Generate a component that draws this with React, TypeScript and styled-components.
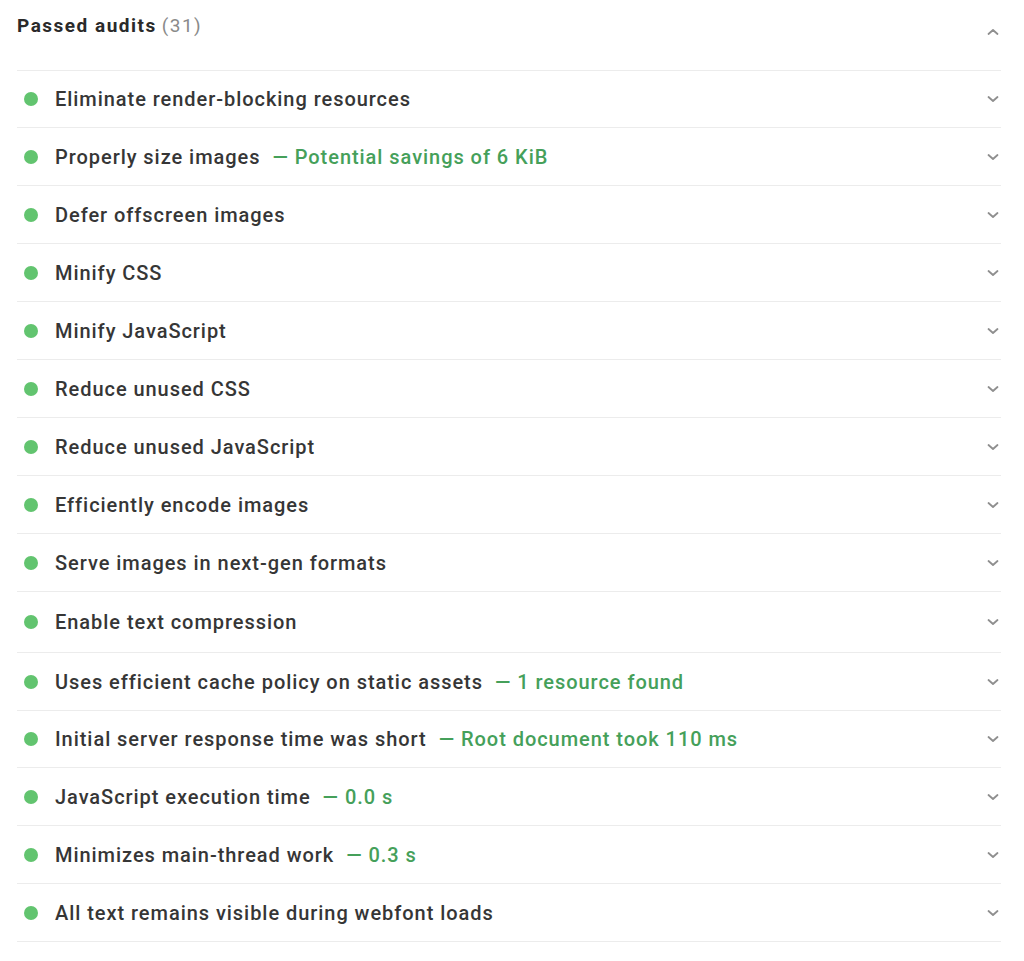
import React from "react";
import styled, { createGlobalStyle } from "styled-components";

const Global = createGlobalStyle`
  html, body { margin: 0; padding: 0; background: #ffffff; }
  body { font-family: Roboto, "Liberation Sans", Arial, sans-serif; color: #2f2f2f; }
`;

const Panel = styled.section`
  width: 984px;
  margin-left: 17px;
`;

const Header = styled.div`
  height: 70px;
  display: flex;
  align-items: flex-start;
  justify-content: space-between;
  border-bottom: 1px solid #ececec;
`;

const Title = styled.h2`
  margin: 14px 0 0 0;
  font-size: 19px;
  line-height: 24px;
  font-weight: 700;
  color: #2a2a2a;
  letter-spacing: 1.5px;
`;

const Count = styled.span`
  font-weight: 400;
  color: #8a8a8a;
  margin-left: 5px;
`;

const List = styled.ul`
  list-style: none;
  margin: 0;
  padding: 0;
`;

const Row = styled.li<{ $h: number }>`
  height: ${(p) => p.$h}px;
  box-sizing: border-box;
  display: flex;
  align-items: center;
  border-bottom: 1px solid #ececec;
`;

const Dot = styled.span`
  width: 14px;
  height: 14px;
  border-radius: 50%;
  background: #62c46f;
  margin-left: 7px;
  margin-right: 17px;
  flex: none;
`;

const Label = styled.span`
  font-size: 20px;
  font-weight: 500;
  letter-spacing: 0.95px;
  color: #363636;
  flex: 1;
  white-space: nowrap;
`;

const Extra = styled.span`
  color: #45a05a;
  margin-left: 12px;
`;

const Chevron = styled.svg<{ $top?: number }>`
  width: 14px;
  height: 10px;
  margin-right: 1px;
  margin-top: ${(p) => p.$top ?? 0}px;
  flex: none;
`;

const Down = () => (
  <Chevron viewBox="0 0 14 10">
    <path d="M2.5 3 L7 7 L11.5 3" fill="none" stroke="#8f8f8f" strokeWidth="1.8" strokeLinecap="round" strokeLinejoin="round" />
  </Chevron>
);

const Up = () => (
  <Chevron viewBox="0 0 14 10" $top={27}>
    <path d="M2.5 7 L7 3 L11.5 7" fill="none" stroke="#8f8f8f" strokeWidth="1.8" strokeLinecap="round" strokeLinejoin="round" />
  </Chevron>
);

const audits: { t: string; e?: string; h: number }[] = [
  { t: "Eliminate render-blocking resources", h: 57 },
  { t: "Properly size images", e: "Potential savings of 6 KiB", h: 58 },
  { t: "Defer offscreen images", h: 58 },
  { t: "Minify CSS", h: 58 },
  { t: "Minify JavaScript", h: 58 },
  { t: "Reduce unused CSS", h: 58 },
  { t: "Reduce unused JavaScript", h: 58 },
  { t: "Efficiently encode images", h: 58 },
  { t: "Serve images in next-gen formats", h: 58 },
  { t: "Enable text compression", h: 61 },
  { t: "Uses efficient cache policy on static assets", e: "1 resource found", h: 58 },
  { t: "Initial server response time was short", e: "Root document took 110 ms", h: 57 },
  { t: "JavaScript execution time", e: "0.0 s", h: 58 },
  { t: "Minimizes main-thread work", e: "0.3 s", h: 58 },
  { t: "All text remains visible during webfont loads", h: 58 },
];

export default function App() {
  return (
    <>
      <Global />
      <Panel>
        <Header>
          <Title>
            Passed audits<Count>(31)</Count>
          </Title>
          <Up />
        </Header>
        <List>
          {audits.map((a) => (
            <Row key={a.t} $h={a.h}>
              <Dot />
              <Label>
                {a.t}
                {a.e && <Extra>— {a.e}</Extra>}
              </Label>
              <Down />
            </Row>
          ))}
        </List>
      </Panel>
    </>
  );
}
